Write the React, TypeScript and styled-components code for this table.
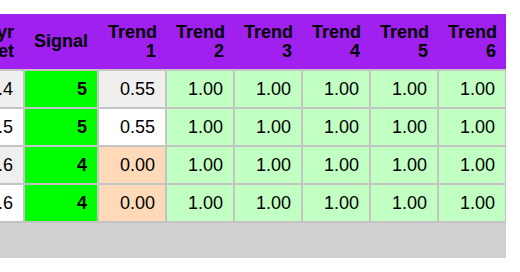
import { useEffect, useRef } from "react";
import styled, { createGlobalStyle } from "styled-components";

const GlobalStyle = createGlobalStyle`
  body {
    margin: 0;
    background: #ffffff;
    font-family: "Liberation Sans", Arial, sans-serif;
  }
`;

const Page = styled.div`
  padding-top: 14px;
  width: 506px;
`;

const Scroller = styled.div`
  width: 506px;
  overflow: hidden;
`;

const Table = styled.table`
  table-layout: fixed;
  border-collapse: collapse;
  width: 553px;
  font-size: 18px;
`;

const HeadCell = styled.th`
  background: #a020f0;
  color: #000;
  font-weight: bold;
  text-align: right;
  padding: 0 10px;
  height: 55px;
  line-height: 19px;
  vertical-align: middle;
`;

type Tone = "stripe" | "plain" | "signal" | "peach" | "good";

const toneColor: Record<Tone, string> = {
  stripe: "#efefef",
  plain: "#ffffff",
  signal: "#00ff00",
  peach: "#ffdab9",
  good: "#c2ffc2",
};

const Cell = styled.td<{ $tone: Tone; $bold?: boolean }>`
  background: ${(p) => toneColor[p.$tone]};
  font-weight: ${(p) => (p.$bold ? "bold" : "normal")};
  border: 2px solid #c4c4c4;
  text-align: right;
  padding: 0 10px;
  height: 36px;
  color: #000;
`;

const Footer = styled.div`
  height: 35px;
  background: #d0d0d0;
`;

const rows = [
  { ret: "11.4", signal: 5, trend1: "0.55" },
  { ret: "11.5", signal: 5, trend1: "0.55" },
  { ret: "11.6", signal: 4, trend1: "0.00" },
  { ret: "11.6", signal: 4, trend1: "0.00" },
];

const trends = [2, 3, 4, 5, 6];

export default function App() {
  const scrollRef = useRef<HTMLDivElement>(null);

  useEffect(() => {
    if (scrollRef.current) scrollRef.current.scrollLeft = 47;
  }, []);

  return (
    <Page>
      <GlobalStyle />
      <Scroller ref={scrollRef}>
        <Table>
          <colgroup>
            <col style={{ width: 70 }} />
            <col style={{ width: 74 }} />
            {[1, ...trends].map((t) => (
              <col key={t} style={{ width: 68 }} />
            ))}
          </colgroup>
          <thead>
            <tr>
              <HeadCell>
                5yr
                <br />
                Ret
              </HeadCell>
              <HeadCell>Signal</HeadCell>
              {[1, ...trends].map((t) => (
                <HeadCell key={t}>
                  Trend
                  <br />
                  {t}
                </HeadCell>
              ))}
            </tr>
          </thead>
          <tbody>
            {rows.map((r, i) => {
              const base: Tone = i % 2 === 0 ? "stripe" : "plain";
              return (
                <tr key={i}>
                  <Cell $tone={base}>{r.ret}</Cell>
                  <Cell $tone="signal" $bold>
                    {r.signal}
                  </Cell>
                  <Cell $tone={r.trend1 === "0.00" ? "peach" : base}>{r.trend1}</Cell>
                  {trends.map((t) => (
                    <Cell key={t} $tone="good">
                      1.00
                    </Cell>
                  ))}
                </tr>
              );
            })}
          </tbody>
        </Table>
      </Scroller>
      <Footer />
    </Page>
  );
}
